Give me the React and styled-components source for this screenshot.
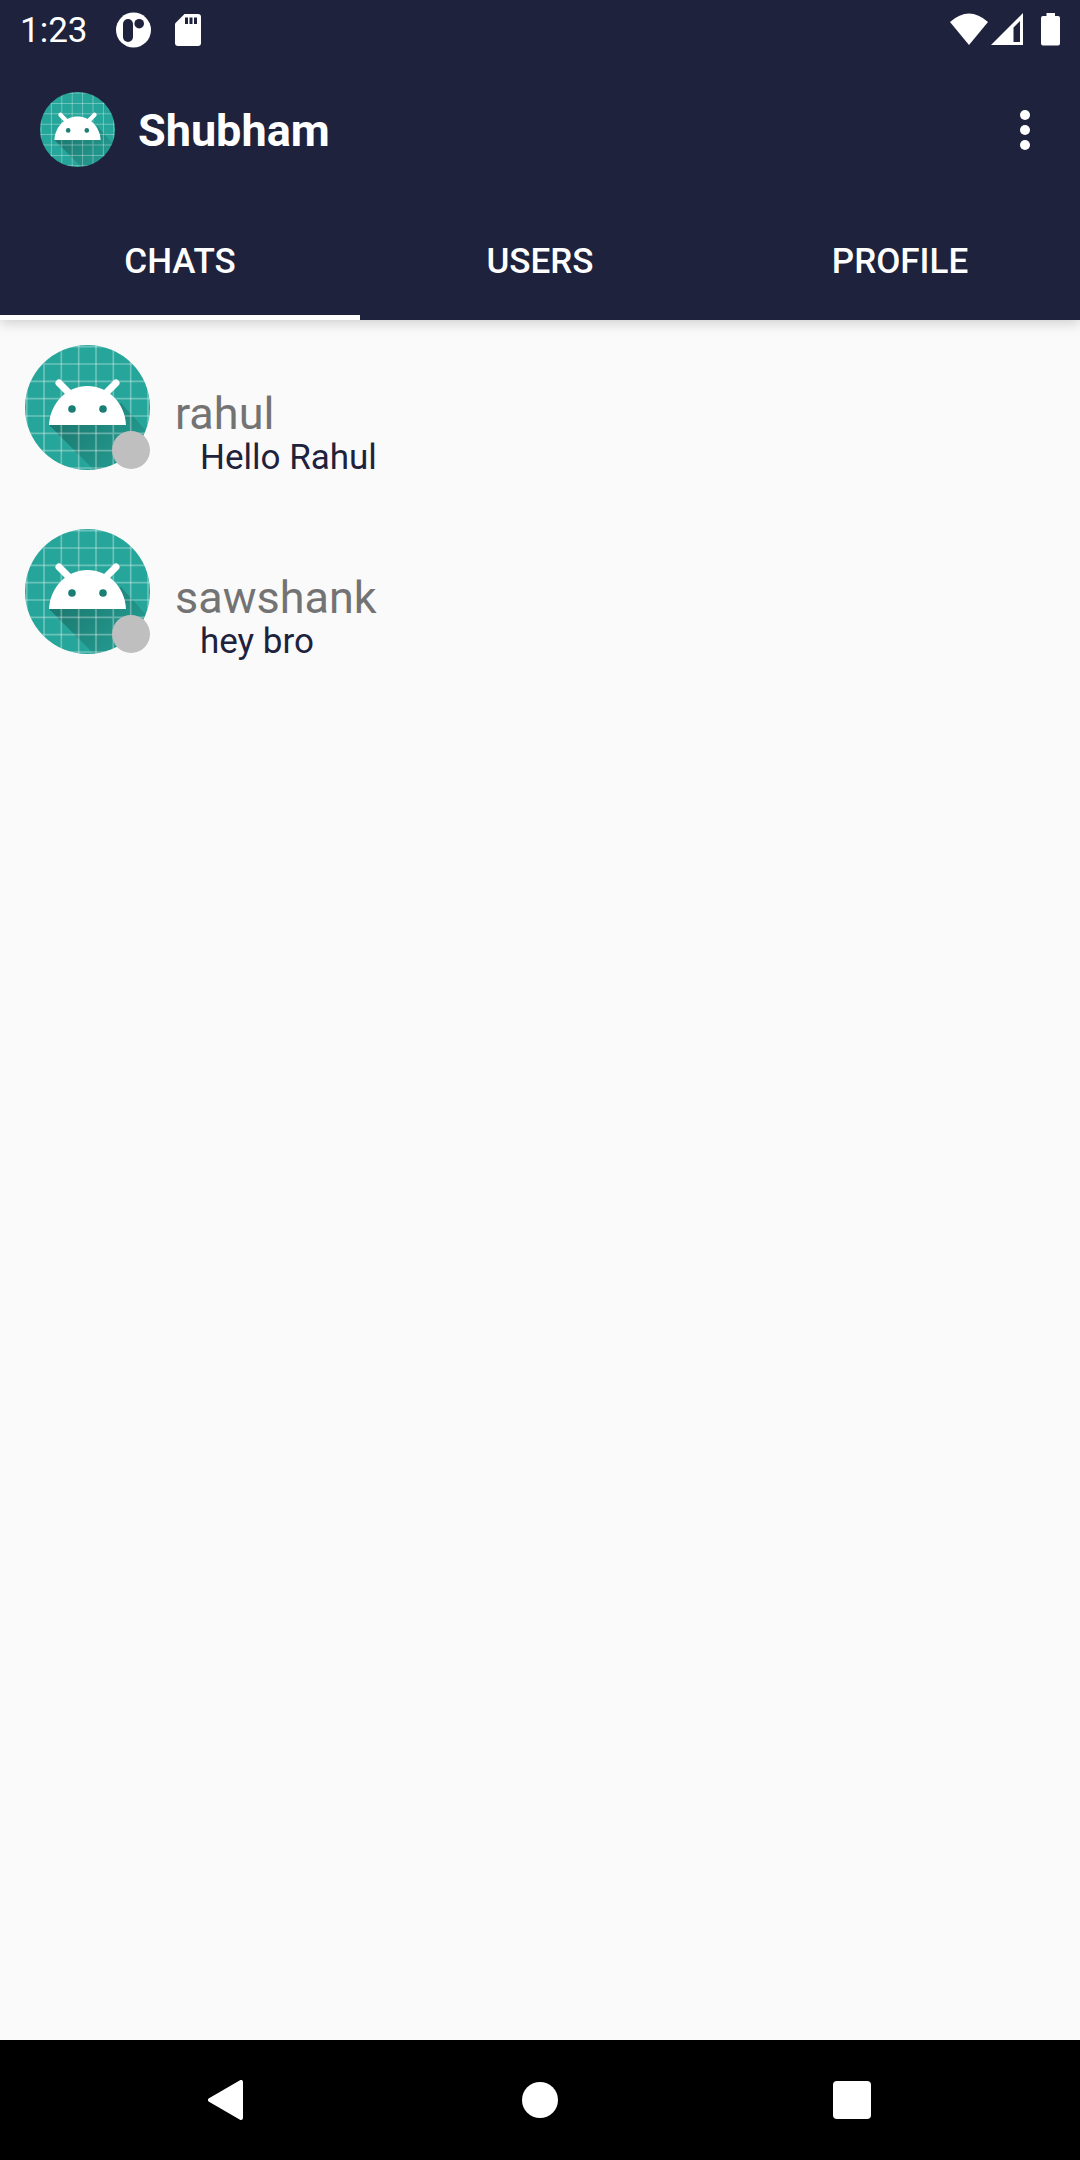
import React, { useId, useState } from "react";
import styled, { createGlobalStyle } from "styled-components";

const navy = "#1e223c";

const GlobalStyle = createGlobalStyle`
  * { box-sizing: border-box; }
  body {
    margin: 0;
    background: #fafafa;
    font-family: Roboto, "Noto Sans", sans-serif;
  }
  button { font: inherit; color: inherit; border: 0; padding: 0; background: none; cursor: pointer; }
  svg { display: block; }
`;

const Screen = styled.div`
  display: flex;
  flex-direction: column;
  min-height: 100vh;
`;

const Header = styled.header`
  position: relative;
  background: ${navy};
  color: #fff;
  box-shadow: 0 3px 12px rgba(0, 0, 0, 0.18);
`;

const StatusBar = styled.div`
  display: flex;
  align-items: center;
  justify-content: space-between;
  height: 60px;
  padding: 0 20px;
`;

const StatusGroup = styled.div`
  display: flex;
  align-items: center;
  gap: 24px;
`;

const Clock = styled.time`
  padding-top: 2px;
  margin-right: 4px;
  font-size: 35px;
  line-height: 40px;
`;

const Toolbar = styled.div`
  display: flex;
  align-items: flex-start;
  height: 140px;
  padding: 32px 30px 0 40px;
`;

const Title = styled.h1`
  flex: 1;
  margin: 0 0 0 23px;
  font-size: 45px;
  line-height: 78px;
  font-weight: 700;
`;

const MenuButton = styled.button`
  display: flex;
  align-items: center;
  justify-content: center;
  width: 50px;
  height: 76px;
`;

const Tabs = styled.div`
  display: flex;
`;

const Tab = styled.button`
  flex: 1;
  height: 120px;
  padding-top: 2px;
  font-size: 35px;
  font-weight: 500;
  text-transform: uppercase;
  box-shadow: ${(p) => (p.$active ? "inset 0 -5px 0 #fff" : "none")};
`;

const ChatList = styled.ul`
  flex: 1;
  margin: 0;
  padding: 0;
  list-style: none;
`;

const ChatRow = styled.li`
  display: flex;
  gap: 25px;
  height: 184px;
  padding: 25px;
`;

const AvatarBox = styled.div`
  position: relative;
  flex: none;
  width: 125px;
  height: 125px;
`;

const Presence = styled.span`
  position: absolute;
  right: 0;
  bottom: 1px;
  width: 38px;
  height: 38px;
  border-radius: 50%;
  background: #bfbfbf;
`;

const ChatText = styled.div`
  padding-top: 44px;
`;

const Name = styled.div`
  font-size: 45px;
  line-height: 50px;
  color: #737373;
`;

const Message = styled.div`
  padding-left: 25px;
  font-size: 35px;
  line-height: 38px;
  color: ${navy};
`;

const NavBar = styled.nav`
  display: flex;
  height: 120px;
  padding: 0 72px;
  background: #000;
`;

const NavButton = styled.button`
  flex: 1;
  display: flex;
  align-items: center;
  justify-content: center;
`;

const gridSteps = [1.7, 19, 36.3, 53.7, 71, 88.3, 105.7, 123];

function Robot({ size }) {
  const id = useId();
  const clip = id + "c";
  const shade = id + "g";
  return (
    <svg width={size} height={size} viewBox="0 0 125 125" aria-hidden="true">
      <defs>
        <clipPath id={clip}>
          <circle cx="62.5" cy="62.5" r="62.5" />
        </clipPath>
        <linearGradient id={shade} gradientUnits="userSpaceOnUse" x1="45" y1="72" x2="92" y2="119">
          <stop offset="0" stopColor="#000" stopOpacity="0.26" />
          <stop offset="1" stopColor="#000" stopOpacity="0.08" />
        </linearGradient>
      </defs>
      <g clipPath={`url(#${clip})`}>
        <rect width="125" height="125" fill="#26a69a" />
        <path d="M24 80L79 135H135V101L96 58Z" fill={`url(#${shade})`} />
        <g stroke="#fff" strokeOpacity="0.32" strokeWidth="1.7">
          {gridSteps.map((s) => (
            <path key={s} d={`M${s} 0V125M0 ${s}H125`} />
          ))}
        </g>
      </g>
      <path d="M34 38L45 49M91 38L80 49" stroke="#fff" strokeWidth="7" strokeLinecap="round" />
      <path d="M24 80C25 58 42 41 62.500 41S100 58 101 80Z" fill="#fff" />
      <circle cx="47" cy="64" r="3.800" fill="#1b7e74" />
      <circle cx="78" cy="64" r="3.800" fill="#1b7e74" />
    </svg>
  );
}

const chats = [
  { name: "rahul", message: "Hello Rahul" },
  { name: "sawshank", message: "hey bro" },
];

const tabs = ["Chats", "Users", "Profile"];

export default function App() {
  const [active, setActive] = useState("Chats");
  return (
    <Screen>
      <GlobalStyle />
      <Header>
        <StatusBar>
          <StatusGroup>
            <Clock>1:23</Clock>
            <svg width="35" height="36" viewBox="0 0 35 36" aria-hidden="true">
              <circle cx="17.5" cy="18" r="17.5" fill="#fff" />
              <rect x="7" y="7" width="10" height="23" rx="5" fill={navy} />
              <circle cx="23.200" cy="11.700" r="4.800" fill={navy} />
            </svg>
            <svg width="26" height="32" viewBox="0 0 26 32" aria-hidden="true">
              <path d="M9.500 0H23Q26 0 26 3V29Q26 32 23 32H3Q0 32 0 29V9.500Z" fill="#fff" />
              <path d="M10 3.500H13V10H10ZM14.500 3.500H17.500V10H14.500ZM19 3.500H22V10H19Z" fill={navy} />
            </svg>
          </StatusGroup>
          <StatusGroup>
            <svg width="110" height="34" viewBox="0 0 110 34" aria-hidden="true">
              <path d="M0 9Q19 -8 38 9L19 32Z" fill="#fff" />
              <path
                d="M73 0V32H41ZM70 8L63.500 14.500V29H70Z"
                fill="#fff"
                fillRule="evenodd"
              />
              <path d="M96.500 0H105V3H108Q110 3 110 5V30.500Q110 32.500 108 32.500H93Q91 32.500 91 30.500V5Q91 3 93 3H96.500Z" fill="#fff" />
            </svg>
          </StatusGroup>
        </StatusBar>
        <Toolbar>
          <Robot size={75} />
          <Title>Shubham</Title>
          <MenuButton aria-label="More options">
            <svg width="10" height="60" viewBox="0 0 10 60" fill="#fff" aria-hidden="true">
              <circle cx="5" cy="15" r="5" />
              <circle cx="5" cy="30" r="5" />
              <circle cx="5" cy="45" r="5" />
            </svg>
          </MenuButton>
        </Toolbar>
        <Tabs role="tablist">
          {tabs.map((t) => (
            <Tab key={t} role="tab" aria-selected={t === active} $active={t === active} onClick={() => setActive(t)}>
              {t}
            </Tab>
          ))}
        </Tabs>
      </Header>
      <ChatList>
        {chats.map((c) => (
          <ChatRow key={c.name}>
            <AvatarBox>
              <Robot size={125} />
              <Presence />
            </AvatarBox>
            <ChatText>
              <Name>{c.name}</Name>
              <Message>{c.message}</Message>
            </ChatText>
          </ChatRow>
        ))}
      </ChatList>
      <NavBar>
        <NavButton aria-label="Back">
          <svg width="40" height="40" viewBox="0 0 40 40" aria-hidden="true">
            <path d="M2 20L33 2V38Z" fill="#fff" stroke="#fff" strokeWidth="4" strokeLinejoin="round" />
          </svg>
        </NavButton>
        <NavButton aria-label="Home">
          <svg width="40" height="40" viewBox="0 0 40 40" aria-hidden="true">
            <circle cx="20" cy="20" r="18" fill="#fff" />
          </svg>
        </NavButton>
        <NavButton aria-label="Recent apps">
          <svg width="40" height="40" viewBox="0 0 40 40" aria-hidden="true">
            <rect x="1" y="1" width="38" height="38" rx="4" fill="#fff" />
          </svg>
        </NavButton>
      </NavBar>
    </Screen>
  );
}
